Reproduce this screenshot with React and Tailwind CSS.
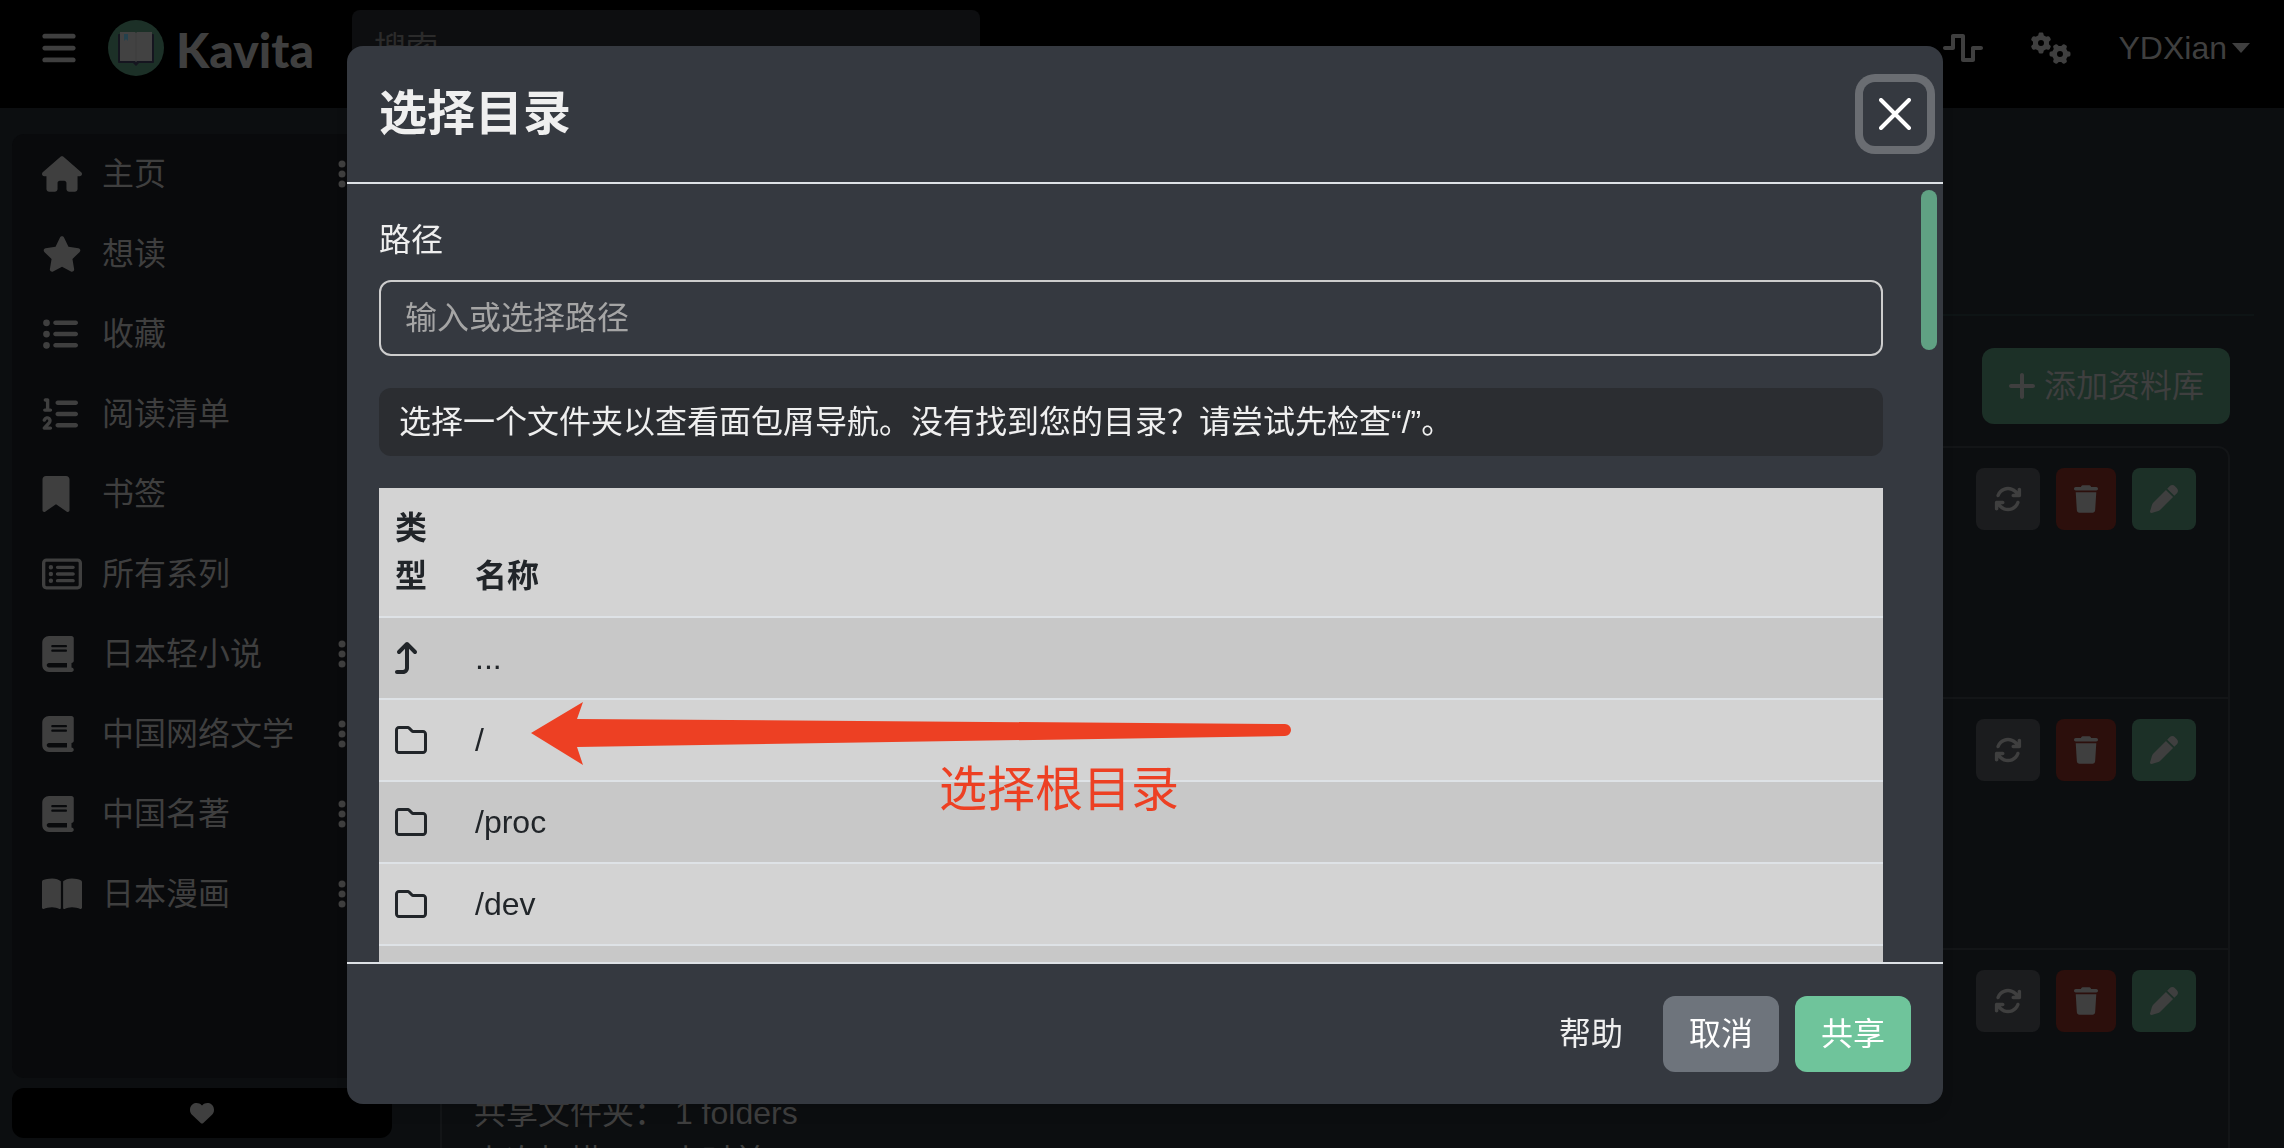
import { useState } from "react";
import {
  FaArrowTurnUp,
  FaArrowsRotate,
  FaBars,
  FaBook,
  FaBookOpen,
  FaBookmark,
  FaEllipsisVertical,
  FaGears,
  FaHeart,
  FaHouse,
  FaListOl,
  FaListUl,
  FaPen,
  FaPlus,
  FaRegFolder,
  FaRegRectangleList,
  FaStar,
  FaTrash,
  FaWaveSquare,
} from "react-icons/fa6";

const navItems = [
  { label: "主页", icon: FaHouse, width: "w-10", menu: true },
  { label: "想读", icon: FaStar, width: "w-10" },
  { label: "收藏", icon: FaListUl, width: "w-9" },
  { label: "阅读清单", icon: FaListOl, width: "w-9" },
  { label: "书签", icon: FaBookmark, width: "w-7" },
  { label: "所有系列", icon: FaRegRectangleList, width: "w-10" },
  { label: "日本轻小说", icon: FaBook, width: "w-8", menu: true },
  { label: "中国网络文学", icon: FaBook, width: "w-8", menu: true },
  { label: "中国名著", icon: FaBook, width: "w-8", menu: true },
  { label: "日本漫画", icon: FaBookOpen, width: "w-10", menu: true },
];

const libraries = [
  { id: 1, details: [] },
  { id: 2, details: [] },
  { id: 3, details: ["共享文件夹： 1 folders", "上次扫描： 1 小时前"] },
];

const folders = ["/", "/proc", "/dev", "/run"];

function Logo() {
  return (
    <svg viewBox="0 0 56 56" className="size-14">
      <circle cx="28" cy="28" r="28" fill="#1c3027" />
      <path d="M11 14h34a1 1 0 0 1 1 1v27a1 1 0 0 1-1 1H31l-3 3-3-3H11a1 1 0 0 1-1-1V15a1 1 0 0 1 1-1z" fill="#15151f" />
      <path d="M12 12h15l1 1 1-1h15v29H29l-1 1-1-1H12z" fill="#424242" />
      <path d="M28 13v28" stroke="#3c3c3c" strokeWidth="1" />
      <path d="M16 14h4v7l-2-2-2 2z" fill="#24414d" />
    </svg>
  );
}

function TopBar() {
  return (
    <header className="flex h-27 items-start bg-black text-[#3f3f3f]">
      <button aria-label="菜单" className="mt-[29px] ml-[42px]">
        <FaBars className="h-[38px] w-[34px]" />
      </button>
      <a href="#home" className="mt-[18px] ml-8 flex w-[244px] items-center gap-3">
        <Logo />
        <span className="pt-1 font-['Lato'] text-5xl leading-14 font-black">Kavita</span>
      </a>
      <input
        type="text"
        aria-label="搜索"
        placeholder="搜索"
        className="mt-[10px] h-[76px] w-[628px] rounded-lg bg-[#0d0e10] px-[22px] placeholder:text-[#2b2b2b]"
      />
      <div className="mt-6 mr-[34px] ml-auto flex h-12 items-center gap-12">
        <button aria-label="活动">
          <FaWaveSquare className="h-8 w-10" />
        </button>
        <button aria-label="设置">
          <FaGears className="h-8 w-10" />
        </button>
        <button className="flex items-center gap-[5px]">
          YDXian
          <svg viewBox="0 0 18 10" className="h-[10px] w-[18px]">
            <path d="M0 0h18l-9 10z" fill="currentColor" />
          </svg>
        </button>
      </div>
    </header>
  );
}

function SideNav() {
  return (
    <div className="flex w-[380px] shrink-0 flex-col gap-[10px] pb-[10px]">
      <nav className="flex-1 rounded-xl bg-[#090a0c]">
        {navItems.map((item) => (
          <div key={item.label} className="flex h-20 items-center pr-[46px] pl-[30px]">
            <a href="#nav" className="flex flex-1 items-center">
              <span className="w-[60px]">
                <item.icon className={`h-9 ${item.width}`} />
              </span>
              {item.label}
            </a>
            {item.menu && (
              <button aria-label="更多">
                <FaEllipsisVertical className="h-8 w-2" />
              </button>
            )}
          </div>
        ))}
      </nav>
      <a href="#donate" aria-label="捐赠" className="flex h-[50px] items-center justify-center rounded-xl bg-black">
        <FaHeart className="size-6" />
      </a>
    </div>
  );
}

function LibraryRow({ details }) {
  return (
    <li className="flex h-[251px] flex-col border-b-2 border-[#131517] px-8 pt-5 pb-[14px]">
      <div className="flex justify-end gap-4">
        <button aria-label="扫描" className="flex h-[62px] w-16 items-center justify-center rounded-lg bg-[#1b1c1e]">
          <FaArrowsRotate className="size-7" />
        </button>
        <button aria-label="删除" className="flex h-[62px] w-15 items-center justify-center rounded-lg bg-[#2c0f0c]">
          <FaTrash className="h-7 w-6" />
        </button>
        <button aria-label="编辑" className="flex h-[62px] w-16 items-center justify-center rounded-lg bg-[#1c3027]">
          <FaPen className="size-7" />
        </button>
      </div>
      <div className="mt-auto">
        {details.map((line) => (
          <p key={line}>{line}</p>
        ))}
      </div>
    </li>
  );
}

function Libraries() {
  return (
    <main className="min-w-0 flex-1 pr-[30px] pl-12">
      <div className="h-[180px] border-b-2 border-[#0e1415]" />
      <div className="mt-8 mr-6">
        <div className="flex justify-end">
          <button className="flex h-19 items-center gap-2 rounded-xl bg-[#1c3027] px-[26px]">
            <FaPlus className="h-8 w-7" />
            添加资料库
          </button>
        </div>
        <ul className="mt-[22px] rounded-xl border-2 border-[#131517]">
          {libraries.map((library) => (
            <LibraryRow key={library.id} details={library.details} />
          ))}
        </ul>
      </div>
    </main>
  );
}

function FolderTable({ onSelect }) {
  return (
    <table className="w-full table-fixed bg-[#d3d3d3] text-left text-[#212529]">
      <thead>
        <tr className="border-b-2 border-[#dee2e6]">
          <th className="w-20 p-4 pr-8 align-bottom font-bold">类型</th>
          <th className="p-4 align-bottom font-bold">名称</th>
        </tr>
      </thead>
      <tbody>
        <tr className="border-b-2 border-[#dee2e6] bg-[#c8c8c8]">
          <td className="px-4">
            <FaArrowTurnUp className="h-8 w-6" />
          </td>
          <td className="p-4">...</td>
        </tr>
        {folders.map((folder) => (
          <tr
            key={folder}
            onClick={() => onSelect(folder)}
            className="border-b-2 border-[#dee2e6] odd:bg-[#c8c8c8] even:bg-[#d3d3d3]"
          >
            <td className="px-4">
              <FaRegFolder className="size-8" />
            </td>
            <td className="p-4">{folder}</td>
          </tr>
        ))}
      </tbody>
    </table>
  );
}

// Hand drawn hint that points at the root folder
function RootHint() {
  return (
    <div className="pointer-events-none absolute top-[518px] left-[184px] text-[#ed4023]">
      <svg viewBox="0 0 762 64" className="h-16 w-[762px]">
        <path d="M0 31 52 0 46 17 754 22a6 6 0 0 1 0 12L46 45 52 63Z" fill="currentColor" />
      </svg>
      <p className="pl-[408px] text-5xl leading-12">选择根目录</p>
    </div>
  );
}

function DirectoryPicker() {
  const [path, setPath] = useState("");

  return (
    <div
      role="dialog"
      aria-labelledby="picker-title"
      className="flex w-full max-w-[1596px] flex-col rounded-2xl bg-[#353940] text-[#efefef] shadow-lg"
    >
      <div className="flex items-center justify-between border-b-2 border-[#dee2e6] py-8 pr-4 pl-8">
        <h2 id="picker-title" className="text-5xl leading-[72px] font-bold">
          选择目录
        </h2>
        <button aria-label="关闭" className="-my-2 rounded-xl p-4 text-white ring-8 ring-[#6a6d72]">
          <svg viewBox="0 0 32 32" className="size-8">
            <path d="M2 2 30 30M30 2 2 30" stroke="currentColor" strokeWidth="4" strokeLinecap="round" />
          </svg>
        </button>
      </div>

      <div className="relative flex min-h-0 flex-1 overflow-hidden pr-[6px] pl-8">
        <div className="flex-1 pt-8">
          <label htmlFor="path" className="mb-4 block">
            路径
          </label>
          <input
            id="path"
            type="text"
            value={path}
            onChange={(e) => setPath(e.target.value)}
            placeholder="输入或选择路径"
            className="block h-19 w-full rounded-xl border-2 border-[#cdcdcd] px-6 placeholder:text-[#a5a5a5]"
          />
          <p className="my-8 rounded-xl bg-[#2b2d31] px-5 py-[10px]">
            选择一个文件夹以查看面包屑导航。没有找到您的目录？请尝试先检查“/”。
          </p>
          <FolderTable onSelect={setPath} />
        </div>
        <div className="mt-[6px] ml-[38px] h-40 w-4 rounded-full bg-[#60a183]" />
        <RootHint />
      </div>

      <div className="flex justify-end gap-4 border-t-2 border-[#dee2e6] p-8">
        <button className="h-19 rounded-xl px-6">帮助</button>
        <button className="h-19 rounded-xl bg-[#6e747c] px-[26px] text-white">取消</button>
        <button className="h-19 rounded-xl bg-[#6fc49b] px-[26px] text-white">共享</button>
      </div>
    </div>
  );
}

export default function App() {
  return (
    <div className="flex h-screen flex-col overflow-hidden bg-[#0c0e10] font-['Liberation_Sans','Noto_Sans_CJK_SC',sans-serif] text-[32px] leading-12 text-[#3f3f3f]">
      <TopBar />
      <div className="flex min-h-0 flex-1 pl-3">
        <div className="flex pt-[26px]">
          <SideNav />
        </div>
        <div className="flex min-w-0 flex-1 pt-[28px]">
          <Libraries />
        </div>
      </div>
      <div className="fixed inset-0 flex justify-center pt-[46px] pb-11 pl-[6px]">
        <DirectoryPicker />
      </div>
    </div>
  );
}
